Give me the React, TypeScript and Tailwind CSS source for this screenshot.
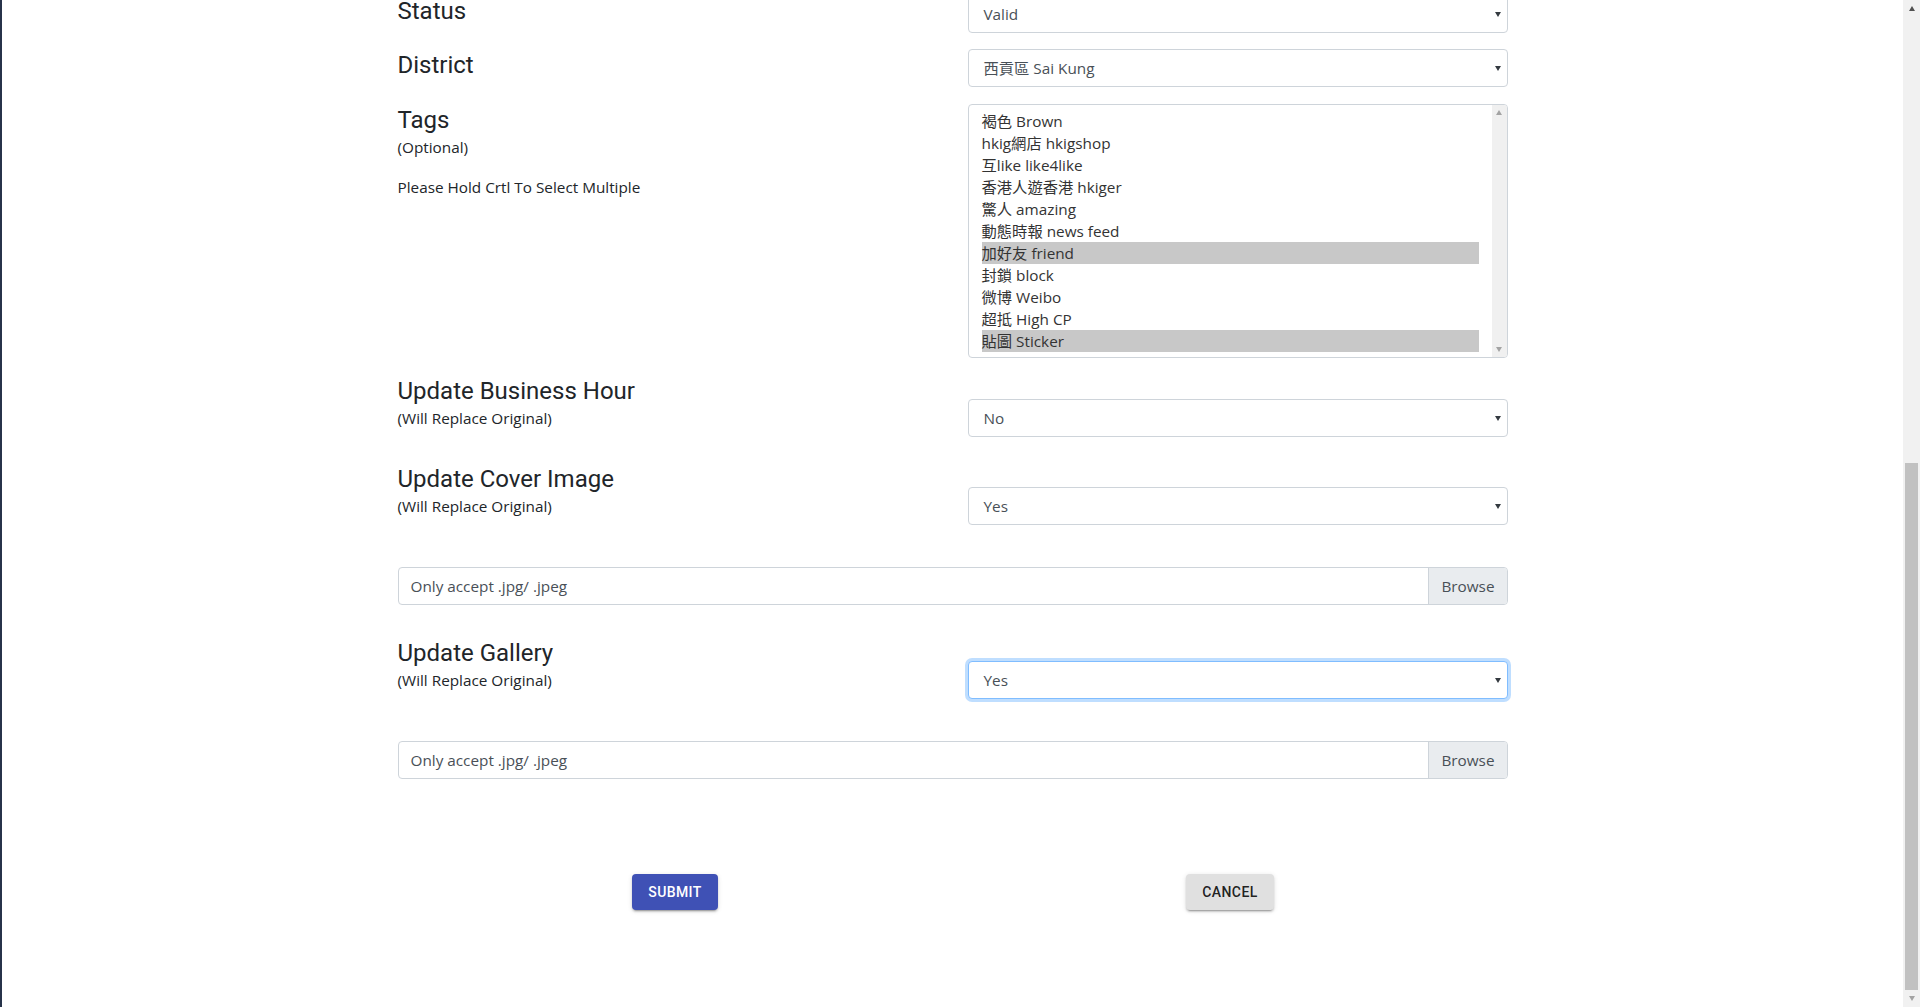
import clsx from 'clsx';
import type { ReactNode } from 'react';

const tags = [
  { zh: '褐色', en: 'Brown' },
  { zh: 'hkig網店', en: 'hkigshop' },
  { zh: '互like', en: 'like4like' },
  { zh: '香港人遊香港', en: 'hkiger' },
  { zh: '驚人', en: 'amazing' },
  { zh: '動態時報', en: 'news feed' },
  { zh: '加好友', en: 'friend', selected: true },
  { zh: '封鎖', en: 'block' },
  { zh: '微博', en: 'Weibo' },
  { zh: '超抵', en: 'High CP' },
  { zh: '貼圖', en: 'Sticker', selected: true },
];

function Caret({ up, color = 'border-t-[#343a40]' }: { up?: boolean; color?: string }) {
  return (
    <span
      className={clsx(
        'h-0 w-0 border-x-[3.5px] border-x-transparent',
        up ? 'rotate-180' : '',
        'border-t-[5px]',
        color,
      )}
    />
  );
}

function Select({ value, focused }: { value: ReactNode; focused?: boolean }) {
  return (
    <div
      className={clsx(
        'flex h-[38px] items-center justify-between rounded-[4px] border bg-white pl-[15px] pr-[6px] text-[15.3px] text-[#495057]',
        focused
          ? 'border-[#80bdff] shadow-[0_0_0_3px_rgba(0,123,255,0.25)]'
          : 'border-[#ced4da]',
      )}
    >
      <span>{value}</span>
      <Caret />
    </div>
  );
}

function FileInput() {
  return (
    <div className="flex h-[38px] overflow-hidden rounded-[4px] border border-[#ced4da] bg-white text-[15.3px] text-[#495057]">
      <div className="flex flex-1 items-center pl-3">Only accept .jpg/ .jpeg</div>
      <div className="flex items-center border-l border-[#ced4da] bg-[#e9ecef] px-3">Browse</div>
    </div>
  );
}

function Label({ title, sub }: { title: string; sub?: string }) {
  return (
    <div>
      <h4 className="font-['Roboto',sans-serif] text-[24px] leading-[32px] text-[#212529]">{title}</h4>
      {sub && <p className="text-[15.3px] leading-[22px] text-[#212529]">{sub}</p>}
    </div>
  );
}

const raised =
  'h-[36px] rounded-[4px] px-4 uppercase tracking-[0.4px] shadow-[0_3px_1px_-2px_rgba(0,0,0,0.2),0_2px_2px_0_rgba(0,0,0,0.14),0_1px_5px_0_rgba(0,0,0,0.12)]';

export default function App() {
  return (
    <div className="flex h-[1007px] overflow-hidden bg-white font-['Open_Sans','Noto_Sans_CJK_TC',sans-serif]">
      {/* sidebar edge */}
      <div className="w-[2px] bg-[#27334a]" />

      <main className="flex flex-1 justify-center">
        <form className="-mt-[5px] w-[1110px]">
          <div className="mb-[16px] grid grid-cols-2 gap-x-[30px]">
            <Label title="Status" />
            <Select value="Valid" />
          </div>

          <div className="mb-[17px] grid grid-cols-2 gap-x-[30px]">
            <Label title="District" />
            <Select value="西貢區 Sai Kung" />
          </div>

          <div className="mb-[17px] grid grid-cols-2 gap-x-[30px]">
            <div>
              <Label title="Tags" sub="(Optional)" />
              <p className="mt-[18px] text-[15.3px] leading-[22px] text-[#212529]">
                Please Hold Crtl To Select Multiple
              </p>
            </div>
            <div className="flex h-[254px] overflow-hidden rounded-[4px] border border-[#ced4da] bg-white">
              <ul className="flex-1 pl-[13px] pr-[13px] pt-[5px] text-[15.3px] text-[#333]">
                {tags.map((t) => (
                  <li
                    key={t.en}
                    className={clsx('h-[22px] leading-[22px]', t.selected && 'bg-[#c8c8c8]')}
                  >
                    {t.zh} {t.en}
                  </li>
                ))}
              </ul>
              <div className="flex w-[15px] flex-col items-center justify-between bg-[#f0f0f0] py-[5px]">
                <Caret up color="border-t-[#a3a3a3]" />
                <Caret color="border-t-[#a3a3a3]" />
              </div>
            </div>
          </div>

          <div className="mb-[26px] grid grid-cols-2 gap-x-[30px]">
            <Label title="Update Business Hour" sub="(Will Replace Original)" />
            <div className="pt-[24px]">
              <Select value="No" />
            </div>
          </div>

          <div className="mb-[42px] grid grid-cols-2 gap-x-[30px]">
            <Label title="Update Cover Image" sub="(Will Replace Original)" />
            <div className="pt-[24px]">
              <Select value="Yes" />
            </div>
          </div>

          <div className="mb-[32px]">
            <FileInput />
          </div>

          <div className="mb-[42px] grid grid-cols-2 gap-x-[30px]">
            <Label title="Update Gallery" sub="(Will Replace Original)" />
            <div className="pt-[24px]">
              <Select value="Yes" focused />
            </div>
          </div>

          <FileInput />

          <div className="mt-[95px] grid grid-cols-2 font-['Roboto',sans-serif] text-[14px] font-medium">
            <div className="flex justify-center">
              <button type="button" className={clsx(raised, 'bg-[#3f51b5] text-white')}>
                Submit
              </button>
            </div>
            <div className="flex justify-center">
              <button type="button" className={clsx(raised, 'bg-[#e0e0e0] text-[rgba(0,0,0,0.87)]')}>
                Cancel
              </button>
            </div>
          </div>
        </form>
      </main>

      {/* page scrollbar, scrolled to the end */}
      <div className="flex w-[17px] flex-col bg-[#f1f1f1]">
        <div className="flex h-[17px] items-center justify-center">
          <Caret up color="border-t-[#505050]" />
        </div>
        <div className="flex flex-1 flex-col justify-end px-[2px]">
          <div className="h-[527px] bg-[#c1c1c1]" />
        </div>
        <div className="flex h-[17px] items-center justify-center">
          <Caret color="border-t-[#a3a3a3]" />
        </div>
      </div>
    </div>
  );
}
